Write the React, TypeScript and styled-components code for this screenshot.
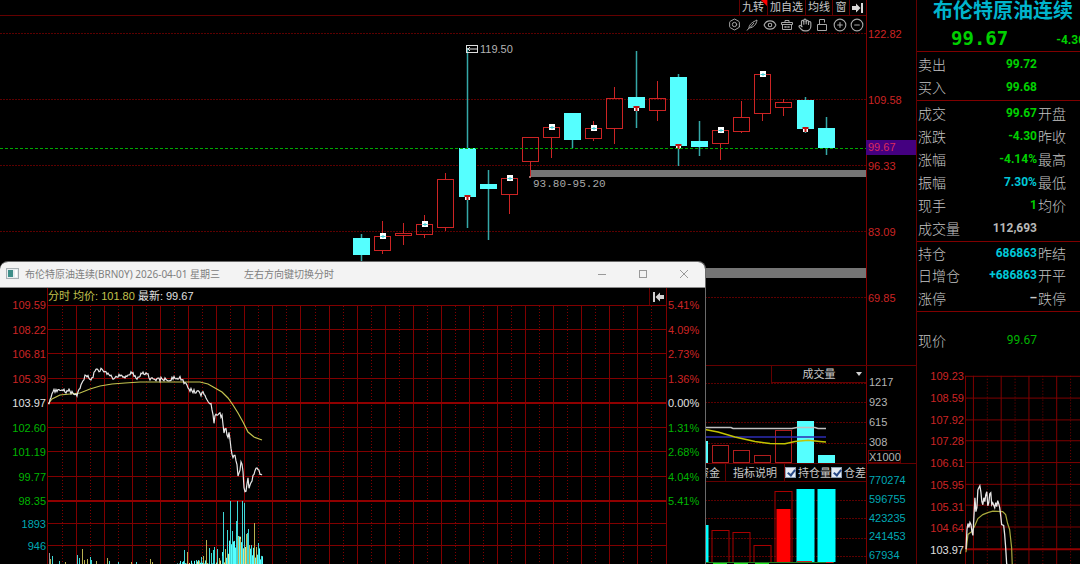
import React from "react";
import styled, { createGlobalStyle, css } from "styled-components";
import { Bolt, CircleMinus, CirclePlus, Eye, Hand } from "lucide-react";

const color = {
  red: "#cc2424",
  grid: "#800000",
  gridDim: "#640000",
  gridDot: "#5c0000",
  cyan: "#55ffff",
  pureCyan: "#00ffff",
  green: "#00c800",
  teal: "#00a8b4",
  grey: "#b4b4b4",
  white: "#e0e0e0",
  olive: "#c2c24e",
};

const GlobalStyle = createGlobalStyle`
  * { box-sizing: border-box; }
  body {
    margin: 0;
    background: #000;
    overflow: hidden;
    font-family: "Liberation Sans", "Noto Sans CJK SC", sans-serif;
    font-size: 11px;
    line-height: 16px;
    color: ${color.grey};
  }
  button, select, input { font: inherit; color: inherit; margin: 0; padding: 0; }
  svg { display: block; }
`;

const Screen = styled.div`
  position: relative;
  display: flex;
  min-height: 100vh;
  max-height: 100vh;
  overflow: hidden;
`;

const Charts = styled.main`
  flex: 1;
  min-width: 0;
  display: flex;
  flex-direction: column;
`;

const PanelRow = styled.section<{ $divided?: boolean }>`
  display: flex;
  ${(p) => p.$divided && `border-top: 1px solid ${color.gridDim};`}
`;

const Plot = styled.div`
  flex: 1;
  min-width: 0;
`;

const Axis = styled.div<{ $tone: string; $top: number; $row?: number }>`
  position: relative;
  flex: none;
  width: 50px;
  padding: ${(p) => p.$top}px 0 0 1px;
  border-left: 1px solid ${color.grid};
  color: ${(p) => p.$tone};
  line-height: ${(p) => p.$row ?? 16}px;
`;

const AxisLabel = styled.div``;

const UnitTag = styled.div`
  width: 33px;
  height: 13px;
  line-height: 12px;
  border: 1px solid ${color.gridDim};
  white-space: nowrap;
`;

const PriceTag = styled.div`
  position: absolute;
  top: 140px;
  left: -1px;
  right: 0;
  height: 15px;
  padding-left: 2px;
  line-height: 15px;
  background: #440080;
  color: #dc2a5c;
`;

const TopBar = styled.div`
  display: flex;
  justify-content: flex-end;
  height: 16px;
  border-bottom: 1px solid ${color.gridDim};
`;

const TopButton = styled.button<{ $flagged?: boolean }>`
  position: relative;
  height: 15px;
  min-width: 17px;
  padding: 0 2px;
  border: 0;
  border-left: 1px solid ${color.gridDim};
  background: none;
  line-height: 15px;
  color: #c8c8c8;
  ${(p) =>
    p.$flagged &&
    css`
      padding-right: 3px;
      &::after {
        content: "";
        position: absolute;
        top: 0;
        right: 0;
        border: 3px solid transparent;
        border-top-color: #f00;
        border-right-color: #f00;
      }
    `}
`;

const IconBar = styled.div`
  display: grid;
  grid-template-columns: repeat(8, 1fr);
  width: 140px;
  height: 17px;
  margin-left: auto;
`;

const IconButton = styled.button`
  display: grid;
  place-items: center;
  border: 0;
  background: none;
  color: #a8a8a8;
`;

const VolumeHeader = styled.div`
  display: flex;
  justify-content: flex-end;
`;

const Dropdown = styled.div`
  position: relative;
  width: 95px;
  height: 17px;
  border: 1px solid ${color.gridDim};
  border-width: 0 0 1px 1px;
  &::after {
    content: "";
    position: absolute;
    top: 6px;
    right: 4px;
    border: 3px solid transparent;
    border-top: 4px solid #d0d0d0;
    pointer-events: none;
  }
`;

const DropdownSelect = styled.select`
  appearance: none;
  width: 100%;
  height: 16px;
  border: 0;
  background: #000;
  color: #c8c8c8;
  text-align: center;
  text-align-last: center;
`;

const TabRow = styled.div`
  display: flex;
  justify-content: flex-end;
  height: 18px;
  border-bottom: 1px solid ${color.gridDim};
  color: #c8c8c8;
`;

const Tab = styled.button<{ $wide?: boolean }>`
  padding: 0 ${(p) => (p.$wide ? 7 : 5)}px;
  border: 0;
  border-right: 1px solid ${color.gridDim};
  background: none;
`;

const CheckLabel = styled.label`
  display: flex;
  align-items: center;
  gap: 2px;
`;

const CheckBox = styled.input`
  appearance: none;
  position: relative;
  width: 11px;
  height: 11px;
  border: 1px solid #8ea0b4;
  background: #e4ebf4;
  &:checked::after {
    content: "";
    position: absolute;
    left: 3px;
    top: 0;
    width: 3px;
    height: 6px;
    border: solid #2a4a86;
    border-width: 0 2px 2px 0;
    transform: rotate(38deg);
  }
`;

/* ---------- quote panel ---------- */

const Quote = styled.aside`
  flex: none;
  width: 164px;
  overflow: hidden;
  border-left: 1px solid ${color.gridDim};
  white-space: nowrap;
`;

const QuoteHeader = styled.header`
  height: 52px;
  border-bottom: 1px solid ${color.grid};
`;

const QuoteTitle = styled.h1`
  margin: 0;
  padding-left: 16px;
  font: 700 20px/20px "Noto Sans CJK SC", sans-serif;
  color: #00b4cc;
`;

const QuotePrice = styled.div`
  display: flex;
  align-items: center;
  gap: 48px;
  padding-left: 34px;
  height: 36px;
  color: #00d000;
  font: 700 19px/36px "DejaVu Sans Mono", monospace;
`;

const QuoteChange = styled.span`
  padding-top: 4px;
  font: 700 12px/16px Roboto, sans-serif;
`;

const QuoteGroup = styled.dl<{ $height: number }>`
  display: grid;
  grid-auto-rows: 1fr;
  height: ${(p) => p.$height}px;
  margin: 0;
  padding-bottom: 2px;
  border-bottom: 1px solid ${color.grid};
`;

const QuoteRow = styled.div`
  display: grid;
  grid-template-columns: 50px 68px 1fr;
  column-gap: 1px;
  align-items: center;
  padding-left: 1px;
`;

const QuoteName = styled.dt`
  font: 300 14px/20px "Noto Sans CJK SC", sans-serif;
  color: #c4c4c4;
`;

const QuoteValue = styled.dd<{ $tone: string; $light?: boolean }>`
  margin: 0;
  text-align: right;
  font: ${(p) => (p.$light ? 400 : 700)} 12px/16px Roboto, sans-serif;
  color: ${(p) => p.$tone};
`;

const CurrentRow = styled(QuoteRow)`
  height: 56px;
  margin: 0;
`;

const MiniChart = styled.div`
  display: flex;
`;

/* ---------- intraday window ---------- */

const Window = styled.section`
  position: absolute;
  left: 0;
  top: 261px;
  width: 706px;
  border: 1px solid #6a6a6a;
  border-left: 0;
  border-radius: 8px 8px 0 0;
  background: #000;
  overflow: hidden;
`;

const TitleBar = styled.header`
  display: flex;
  align-items: center;
  height: 26px;
  padding: 0 0 2px 6px;
  background: #f3f3f3;
  border-bottom: 1px solid #8a8a8a;
  color: #808080;
  font-family: "Noto Sans", "Noto Sans CJK SC", sans-serif;
  font-size: 10px;
`;

const TitleText = styled.span`
  padding-left: 6px;
`;

const TitleHint = styled.span`
  padding-left: 24px;
`;

const WindowControls = styled.div`
  display: flex;
  margin-left: auto;
  padding-right: 1px;
`;

const WindowButton = styled.button`
  display: grid;
  place-items: center;
  width: 41px;
  height: 24px;
  border: 0;
  background: none;
`;

const WindowBody = styled.div`
  display: flex;
`;

const WindowPlot = styled.div`
  flex: 1;
  min-width: 0;
  border: solid ${color.grid};
  border-width: 0 1px;
`;

const InfoBar = styled.div`
  display: flex;
  justify-content: space-between;
  height: 17px;
  color: ${color.white};
`;

const InfoText = styled.div`
  line-height: 17px;
`;

const Average = styled.span`
  color: ${color.olive};
`;

const CollapseButton = styled.button`
  width: 17px;
  border: 0;
  border-left: 1px solid ${color.gridDim};
  background: none;
  display: grid;
  place-items: center;
`;

const Scale = styled.div<{ $width: number; $top: number; $height: number; $right?: boolean }>`
  flex: none;
  display: flex;
  flex-direction: column;
  justify-content: space-between;
  width: ${(p) => p.$width}px;
  height: ${(p) => p.$height}px;
  margin-top: ${(p) => p.$top}px;
  padding: 0 1px;
  text-align: ${(p) => (p.$right ? "right" : "left")};
`;

const ScaleLabel = styled.span<{ $tone: string }>`
  color: ${(p) => p.$tone};
`;

const ScaleColumn = styled.div``;

/* ---------- data ---------- */

type Mark = "buy" | "sell" | undefined;
type Candle = { up: boolean; top: number; bottom: number; high: number; low: number; mark?: Mark };

const candle = (up: boolean, top: number, bottom: number, high: number, low: number, mark?: Mark): Candle => ({
  up, top, bottom, high, low, mark,
});

const candles: Candle[] = [
  candle(false, 238, 255, 234, 262),
  candle(true, 236, 250, 221, 254, "buy"),
  candle(true, 233, 235, 223, 245),
  candle(true, 224, 234, 215, 238, "buy"),
  candle(true, 179, 227, 173, 231),
  candle(false, 148, 197, 48, 228, "sell"),
  candle(false, 184, 189, 170, 240),
  candle(true, 178, 194, 178, 214, "buy"),
  candle(true, 137, 161, 137, 177),
  candle(true, 127, 137, 127, 158, "buy"),
  candle(false, 113, 140, 113, 148),
  candle(true, 128, 138, 121, 141, "buy"),
  candle(true, 98, 128, 87, 144),
  candle(false, 97, 108, 51, 128, "sell"),
  candle(true, 98, 110, 81, 121),
  candle(false, 77, 146, 74, 166, "sell"),
  candle(false, 141, 147, 121, 156),
  candle(true, 130, 143, 130, 160, "buy"),
  candle(true, 117, 131, 101, 133),
  candle(true, 74, 113, 74, 121, "buy"),
  candle(true, 102, 107, 99, 116),
  candle(false, 100, 129, 97, 133, "sell"),
  candle(false, 128, 148, 117, 155),
];

const slotX = (i: number) => Math.round(361 + i * 21.12) + 0.5;

const priceKeys: [number, number][] = [
  [48, 404], [50, 401], [52, 394], [54, 391], [57, 390], [60, 389], [63, 390], [66, 391], [69, 391], [71, 393],
  [74, 393], [77, 395], [79, 388], [82, 384], [84, 378], [87, 375], [89, 378], [91, 381], [93, 376], [96, 370],
  [99, 371], [102, 369], [104, 371], [107, 373], [110, 375], [113, 379], [116, 377], [119, 376], [122, 377],
  [125, 378], [128, 376], [132, 372], [135, 376], [138, 379], [141, 375], [144, 373], [148, 374], [150, 378],
  [153, 380], [157, 380], [162, 379], [167, 380], [171, 379], [175, 378], [180, 378], [183, 381], [186, 383],
  [189, 389], [193, 391], [197, 392], [201, 394], [203, 391], [205, 397], [208, 401], [211, 404], [213, 415],
  [214, 422], [215, 415], [219, 413], [222, 417], [224, 432], [226, 429], [228, 439], [229, 433], [231, 448],
  [233, 458], [235, 454], [237, 465], [238, 478], [240, 472], [241, 462], [243, 470], [244, 488], [246, 493],
  [248, 476], [249, 488], [251, 483], [253, 476], [255, 470], [257, 468], [259, 472], [262, 475],
];

const averageLine =
  "48,404 52,399 60,395 70,394 80,393 90,389 100,386 112,384 125,383 140,382 200,382 208,384 215,388 222,392 228,398 233,405 238,413 243,422 248,432 254,437 262,440";

const wobble = (n: number) => {
  const v = Math.sin(n * 127.1) * 43758.5453;
  return v - Math.floor(v);
};

const priceLine = priceKeys
  .slice(0, -1)
  .flatMap(([x, y], i) => {
    const [nx, ny] = priceKeys[i + 1];
    return Array.from({ length: nx - x }, (_, k) => {
      const py = y + ((ny - y) * k) / (nx - x) + (wobble(x + k) - 0.5) * 4;
      return `${x + k},${py.toFixed(1)}`;
    });
  })
  .concat("262,475")
  .join(" ");

type Bar = [x: number, top: number, tone: string];
const c = "#3fd6d6";
const y = "#b8b050";
const spikes: Bar[] = [
  [49, 553, "#999"], [52, 556, c], [50, 559, y], [59, 561, c], [65, 562, y], [77, 555, c], [79, 558, c], [82, 549, y],
  [84, 560, y], [87, 559, y], [90, 557, c], [91, 560, c], [96, 561, y], [107, 558, y], [109, 561, c], [118, 562, c],
  [131, 562, y], [136, 562, c], [150, 559, y], [152, 562, y], [182, 562, c], [184, 550, c], [187, 552, y],
  [196, 560, c], [199, 561, y], [201, 557, c], [203, 556, y], [206, 540, y], [209, 548, c], [211, 553, c], [213, 550, c],
  [214, 547, c], [217, 549, c], [219, 558, y], [222, 556, c], [223, 512, c], [225, 549, y], [227, 530, c], [230, 501, c],
  [232, 531, c], [237, 501, c], [238, 537, y], [236, 521, c], [240, 539, y], [242, 501, c], [244, 503, c], [246, 534, y],
  [247, 533, c], [248, 529, c], [249, 545, y], [251, 545, c], [254, 523, y], [256, 547, y], [258, 543, c], [261, 556, c],
];
const fill: Bar[] = Array.from({ length: 86 }, (_, i): Bar => {
  const x = 177 + i;
  const peak = x < 222 ? 560 : x < 229 ? 552 : x < 246 ? 536 : x < 254 ? 543 : 548;
  return [x, peak + wobble(x) * (x < 222 ? 6 : 14), wobble(x * 3) > 0.68 ? "#e4e48c" : color.cyan];
});

const openInterest = [
  { i: 16, top: 525, down: true },
  { i: 17, top: 530 },
  { i: 18, top: 532 },
  { i: 19, top: 545 },
  { i: 20, top: 491, solidFrom: 509 },
  { i: 21, top: 489, down: true },
  { i: 22, top: 489, down: true },
];

const volumes = [
  { i: 16, top: 441, down: true },
  { i: 17, top: 445 },
  { i: 18, top: 450 },
  { i: 19, top: 455 },
  { i: 20, top: 430 },
  { i: 21, top: 421, down: true },
  { i: 22, top: 455, down: true },
];

/* ---------- drawings ---------- */

// A strip of chart whose content keeps to the right edge, with guide lines across its full width.
function Strip({ top, height, guides, children }: {
  top: number; height: number; guides: number[]; children: React.ReactNode;
}) {
  return (
    <svg width="100%" height={height}>
      {guides.map((g) => (
        <line key={g} x1="0" x2="100%" y1={g - top + 0.5} y2={g - top + 0.5} stroke={color.gridDot} strokeDasharray="2 1" />
      ))}
      <svg x="100%" overflow="visible">
        <g transform={`translate(-866 ${-top})`}>{children}</g>
      </svg>
    </svg>
  );
}

function CandleShape({ data, x }: { data: Candle; x: number }) {
  return (
    <g>
      {data.up ? (
        <g stroke={color.red} fill="none">
          <path d={`M${x} ${data.high}V${data.top}M${x} ${data.bottom + 1}V${data.low}`} />
          <rect x={x - 8} y={data.top + 0.5} width="16" height={data.bottom - data.top} />
        </g>
      ) : (
        <g>
          <path d={`M${x} ${data.high}V${data.low}`} stroke="#35a8a8" strokeWidth="1.5" />
          <rect x={x - 8.5} y={data.top} width="17" height={data.bottom - data.top} fill={color.cyan} />
        </g>
      )}
      {data.mark === "buy" && (
        <g>
          <rect x={x - 2.5} y={data.top - 3} width="6" height="6" fill="#fff" />
          <path d={`M${x - 2} ${data.top + 0.5}h5M${x + 0.5} ${data.top - 1}v3`} stroke="#3cc8d0" />
        </g>
      )}
      {data.mark === "sell" && (
        <g>
          <rect x={x - 2.5} y={data.bottom - 1} width="5" height="4" fill="#fff" />
          <path d={`M${x - 3} ${data.bottom - 1}h6M${x} ${data.bottom}v3`} stroke="#c01010" strokeWidth="2" />
        </g>
      )}
    </g>
  );
}

function PricePlot() {
  return (
    <Strip top={33} height={332} guides={[33, 99, 165, 231, 297]}>
      <rect x="530" y="170" width="336" height="7" fill="#757575" />
      <rect x="600" y="268" width="266" height="10" fill="#757575" />
      {candles.map((d, i) => (
        <CandleShape key={i} data={d} x={slotX(i)} />
      ))}
      <path d="M-2000 148.500H866" stroke="#00a800" strokeDasharray="3 2" />
      <g stroke="#ddd" fill="none">
        <rect x="466.500" y="45.500" width="11" height="7" />
        <path d="M467 49H477M470 47l-2 2l2 2" />
      </g>
      <text x="480" y="53" fontSize="11" fill={color.grey}>119.50</text>
      <circle cx="530" cy="177" r="1" fill="#d88" />
      <text x="533" y="187" fontSize="11" fontFamily="Liberation Mono, monospace" fill="#a8a8a8">93.80-95.20</text>
    </Strip>
  );
}

function VolumePlot() {
  return (
    <Strip top={383} height={80} guides={[383, 402, 422, 443]}>
      {volumes.map(({ i, top, down }) =>
        down ? (
          <rect key={i} x={slotX(i) - 8.5} y={top} width="17" height={463 - top} fill={color.cyan} />
        ) : (
          <rect key={i} x={slotX(i) - 8} y={top + 0.5} width="16" height={462 - top} fill="none" stroke="#b01e1e" />
        ),
      )}
      <g fill="none" strokeWidth="1.500">
        <path d="M600 427.500H731L733 428.500H792L797 427.500H815L818 428.500H826" stroke="#c0c0c0" />
        <path d="M600 437H826" stroke="#2c2cb4" />
        <path d="M690 426L705 429.500L718 432L735 437L755 441.500L770 443.500L785 443.700L795 441.500L808 440.300L820 441.500L826 442" stroke="#c4c400" />
      </g>
    </Strip>
  );
}

function InterestPlot() {
  return (
    <Strip top={482} height={90} guides={[500, 518, 538, 556]}>
      {openInterest.map(({ i, top, down, solidFrom }) => (
        <g key={i}>
          {down ? (
            <rect x={slotX(i) - 9} y={top} width="18" height={562 - top} fill={color.pureCyan} />
          ) : (
            <rect x={slotX(i) - 8.5} y={top + 0.5} width="17" height={562 - top} fill="none" stroke="#a80000" />
          )}
          {solidFrom && <rect x={slotX(i) - 7} y={solidFrom} width="14" height={562 - solidFrom} fill="#f00" />}
        </g>
      ))}
      <path d="M600 562.500H834" stroke="#1f7a1f" />
      <path d="M713 564h14M734 564h14M755 564h14" stroke="#20e020" strokeWidth="2" />
      <path d="M797 561.500h15M826 562.500h7" stroke="#d02020" />
    </Strip>
  );
}

function IntradayPlot() {
  const solid = Array.from({ length: 21 }, (_, i) => Math.round(76 + i * 28.06) + 0.5);
  const dotted = Array.from({ length: 22 }, (_, i) => Math.round(62 + i * 28.06) + 0.5);
  return (
    <svg width="100%" height="270">
      <g transform="translate(-48 -305)">
        <g fill="none">
          {solid.map((x) => <path key={x} d={`M${x} 305V600`} stroke={color.grid} />)}
          {dotted.map((x) => <path key={x} d={`M${x} 306V600`} stroke={color.grid} strokeDasharray="1 2" />)}
          {[305, 329, 353, 378, 427, 451, 476, 523, 545].map((g) => (
            <path key={g} d={`M48 ${g + 0.5}H700`} stroke={color.grid} />
          ))}
          <path d="M48 403H700M48 501H700" stroke="#900000" strokeWidth="2" />
        </g>
        {[...fill, ...spikes].map(([x, top, tone], i) => (
          <rect key={i} x={x} y={top} width="1" height={600 - top} fill={tone} />
        ))}
        <polyline points={averageLine} fill="none" stroke={color.olive} strokeWidth="1.200" />
        <polyline points={priceLine} fill="none" stroke="#e8e8e8" strokeWidth="1.200" />
      </g>
    </svg>
  );
}

function MiniPlot() {
  return (
    <svg width="116" height="200" viewBox="965 368 116 200">
      <g fill="none">
        {[965, 973, 1001, 1029, 1057].map((x) => <path key={x} d={`M${x + 0.5} 375V600`} stroke={color.grid} />)}
        {[987, 1015, 1043, 1071].map((x) => (
          <path key={x} d={`M${x + 0.5} 375V600`} stroke={color.grid} strokeDasharray="1 2" />
        ))}
        {[375, 397, 419, 440, 462, 484, 505, 527].map((g) => (
          <path key={g} d={`M965 ${g + 0.5}H1081`} stroke={color.grid} />
        ))}
        <path d="M965 550H1081" stroke="#900000" strokeWidth="2" />
        <polyline
          points="966,553 968,535 972,532 975,526 978,519 983,515 988,513 993,511.5 1003,512 1006,515 1008,524 1010,530 1012,548 1013,575"
          stroke="#a8a83c"
          strokeWidth="1.200"
        />
        <polyline
          points="966,550 967,530 968,524 969,528 970,523 971,525 972,532 973,536 974,517 975,498 976,512 977,508 978,490 979,488 980,486 981,492 982,502 983,505 984,498 985,502 986,495 987,492 988,506 989,503 990,494 991,493 992,505 993,503 995,508 996,503 997,507 998,501 999,504 1000,508 1001,516 1002,525 1004,526 1005,535 1006,548 1007,564 1008,575"
          stroke="#e8e8e8"
          strokeWidth="1.300"
        />
      </g>
    </svg>
  );
}

function Glyph({ children }: { children: React.ReactNode }) {
  return (
    <svg width="12" height="12" viewBox="0 0 12 12" fill="none" stroke="currentColor">
      {children}
    </svg>
  );
}

const tools: [string, React.ReactNode][] = [
  ["设置", <Bolt size={13} strokeWidth={1.8} />],
  ["画线", <Glyph><path d="M1 11.500L3 9M3 9C3 5 7 3 11 1C10.500 5 8 8.500 3 9ZM4 8.500L8 4" /></Glyph>],
  ["显示", <Eye size={14} strokeWidth={1.9} />],
  ["清除", <Glyph><path d="M0.500 3.500h11v2h-11zM1.500 5.500v5h9v-5M4 3.500V1.500h4v2M4 7v2M8 7v2M4 8h4" /></Glyph>],
  ["拖动", <Hand size={14} strokeWidth={2} />],
  ["解锁", <Glyph><path d="M1.500 5.500h9v6h-9zM3.500 5.500V0.500h5v3" /></Glyph>],
  ["放大", <CirclePlus size={14} strokeWidth={1.9} />],
  ["缩小", <CircleMinus size={14} strokeWidth={1.9} />],
];

/* ---------- panels ---------- */

const quoteGroups: { height: number; rows: [string, string, string, string?][] }[] = [
  { height: 49, rows: [["卖出", "99.72", "#00d000"], ["买入", "99.68", "#00d000"]] },
  {
    height: 141,
    rows: [
      ["成交", "99.67", "#00d000", "开盘"],
      ["涨跌", "-4.30", "#00d000", "昨收"],
      ["涨幅", "-4.14%", "#00d000", "最高"],
      ["振幅", "7.30%", "#00c8d8", "最低"],
      ["现手", "1", "#00d000", "均价"],
      ["成交量", "112,693", "#b8b8b8"],
    ],
  },
  {
    height: 70,
    rows: [
      ["持仓", "686863", "#00c8d8", "昨结"],
      ["日增仓", "+686863", "#00c8d8", "开平"],
      ["涨停", "–", "#c8c8c8", "跌停"],
    ],
  },
];

function QuotePanel() {
  return (
    <Quote>
      <QuoteHeader>
        <QuoteTitle>布伦特原油连续</QuoteTitle>
        <QuotePrice>
          99.67
          <QuoteChange>-4.30</QuoteChange>
        </QuotePrice>
      </QuoteHeader>
      {quoteGroups.map((group) => (
        <QuoteGroup key={group.height} $height={group.height}>
          {group.rows.map(([name, value, tone, next]) => (
            <QuoteRow key={name}>
              <QuoteName>{name}</QuoteName>
              <QuoteValue $tone={tone}>{value}</QuoteValue>
              {next && <QuoteName>{next}</QuoteName>}
            </QuoteRow>
          ))}
        </QuoteGroup>
      ))}
      <CurrentRow as="dl">
        <QuoteName>现价</QuoteName>
        <QuoteValue $tone="#00b400" $light>99.67</QuoteValue>
      </CurrentRow>
      <MiniChart>
        <Scale $width={48} $top={0} $height={190} $right>
          {["109.23", "108.59", "107.92", "107.28", "106.61", "105.95", "105.31", "104.64"].map((v) => (
            <ScaleLabel key={v} $tone={color.red}>{v}</ScaleLabel>
          ))}
          <ScaleLabel $tone={color.white}>103.97</ScaleLabel>
        </Scale>
        <MiniPlot />
      </MiniChart>
    </Quote>
  );
}

const toneAt = (i: number) => (i < 4 ? color.red : i === 4 ? color.white : "#00b400");

function IntradayWindow() {
  return (
    <Window>
      <TitleBar>
        <svg width="13" height="11" viewBox="0 0 13 11">
          <rect x="0.500" y="0.500" width="12" height="10" fill="#e8eef0" stroke="#a8b0b4" />
          <rect x="2" y="2" width="5" height="7" fill="#3f8f8a" />
          <rect x="9" y="2" width="2" height="7" fill="#fff" />
        </svg>
        <TitleText>布伦特原油连续(BRN0Y) 2026-04-01 星期三</TitleText>
        <TitleHint>左右方向键切换分时</TitleHint>
        <WindowControls>
          <WindowButton aria-label="最小化">
            <svg width="10" height="10"><path d="M1 5.500H9" stroke="#999" /></svg>
          </WindowButton>
          <WindowButton aria-label="最大化">
            <svg width="10" height="10"><rect x="1.500" y="1.500" width="7" height="7" fill="none" stroke="#999" /></svg>
          </WindowButton>
          <WindowButton aria-label="关闭">
            <svg width="10" height="10"><path d="M1 1L9 9M9 1L1 9" stroke="#999" /></svg>
          </WindowButton>
        </WindowControls>
      </TitleBar>
      <WindowBody>
        <ScaleColumn>
          <Scale $width={47} $top={9} $height={212} $right>
            {["109.59", "108.22", "106.81", "105.39", "103.97", "102.60", "101.19", "99.77", "98.35"].map((v, i) => (
              <ScaleLabel key={v} $tone={toneAt(i)}>{v}</ScaleLabel>
            ))}
          </Scale>
          <Scale $width={47} $top={7} $height={38} $right>
            <ScaleLabel $tone={color.teal}>1893</ScaleLabel>
            <ScaleLabel $tone={color.teal}>946</ScaleLabel>
          </Scale>
        </ScaleColumn>
        <WindowPlot>
          <InfoBar>
            <InfoText>
              <Average>分时 均价: 101.80</Average> 最新: 99.67
            </InfoText>
            <CollapseButton aria-label="收起">
              <svg width="11" height="10" viewBox="0 0 11 10">
                <path d="M0 0h2v10H0zM2.500 5L7 0.500V3h4v4H7v2.500z" fill="#d0d0d0" />
              </svg>
            </CollapseButton>
          </InfoBar>
          <IntradayPlot />
        </WindowPlot>
        <Scale $width={38} $top={9} $height={212}>
          {["5.41%", "4.09%", "2.73%", "1.36%", "0.00%", "1.31%", "2.68%", "4.04%", "5.41%"].map((v, i) => (
            <ScaleLabel key={i} $tone={toneAt(i)}>{v}</ScaleLabel>
          ))}
        </Scale>
      </WindowBody>
    </Window>
  );
}

export default function App() {
  return (
    <>
      <GlobalStyle />
      <Screen>
        <Charts>
          <PanelRow>
            <Plot>
              <TopBar>
                <TopButton $flagged>九转</TopButton>
                <TopButton>加自选</TopButton>
                <TopButton>均线</TopButton>
                <TopButton>窗</TopButton>
                <TopButton aria-label="展开">
                  <svg width="11" height="10" viewBox="0 0 11 10">
                    <path d="M9 0h2v10H9zM8.500 5L4 0.500V3H0v4h4v2.500z" fill="#d8d8d8" />
                  </svg>
                </TopButton>
              </TopBar>
              <IconBar>
                {tools.map(([name, icon]) => (
                  <IconButton key={name} aria-label={name}>{icon}</IconButton>
                ))}
              </IconBar>
              <PricePlot />
            </Plot>
            <Axis $tone={color.red} $top={1} $row={66}>
              {["122.82", "109.58", "96.33", "83.09", "69.85"].map((v) => (
                <AxisLabel key={v}>{v}</AxisLabel>
              ))}
              <PriceTag>99.67</PriceTag>
            </Axis>
          </PanelRow>
          <PanelRow $divided>
            <Plot>
              <VolumeHeader>
                <Dropdown>
                  <DropdownSelect aria-label="指标">
                    <option>成交量</option>
                  </DropdownSelect>
                </Dropdown>
              </VolumeHeader>
              <VolumePlot />
            </Plot>
            <Axis $tone={color.grey} $top={8}>
              <Scale $width={48} $top={0} $height={76}>
                {["1217", "923", "615", "308"].map((v) => (
                  <ScaleLabel key={v} $tone={color.grey}>{v}</ScaleLabel>
                ))}
              </Scale>
              <UnitTag>X1000</UnitTag>
            </Axis>
          </PanelRow>
          <PanelRow $divided>
            <Plot>
              <TabRow>
                <Tab>资金</Tab>
                <Tab $wide>指标说明</Tab>
                <CheckLabel>
                  <CheckBox type="checkbox" defaultChecked />
                  持仓量
                </CheckLabel>
                <CheckLabel>
                  <CheckBox type="checkbox" defaultChecked />
                  仓差
                </CheckLabel>
              </TabRow>
              <InterestPlot />
            </Plot>
            <Axis $tone={color.teal} $top={8}>
              <Scale $width={48} $top={0} $height={91}>
                {["770274", "596755", "423235", "241453", "67934"].map((v) => (
                  <ScaleLabel key={v} $tone={color.teal}>{v}</ScaleLabel>
                ))}
              </Scale>
            </Axis>
          </PanelRow>
        </Charts>
        <QuotePanel />
        <IntradayWindow />
      </Screen>
    </>
  );
}
